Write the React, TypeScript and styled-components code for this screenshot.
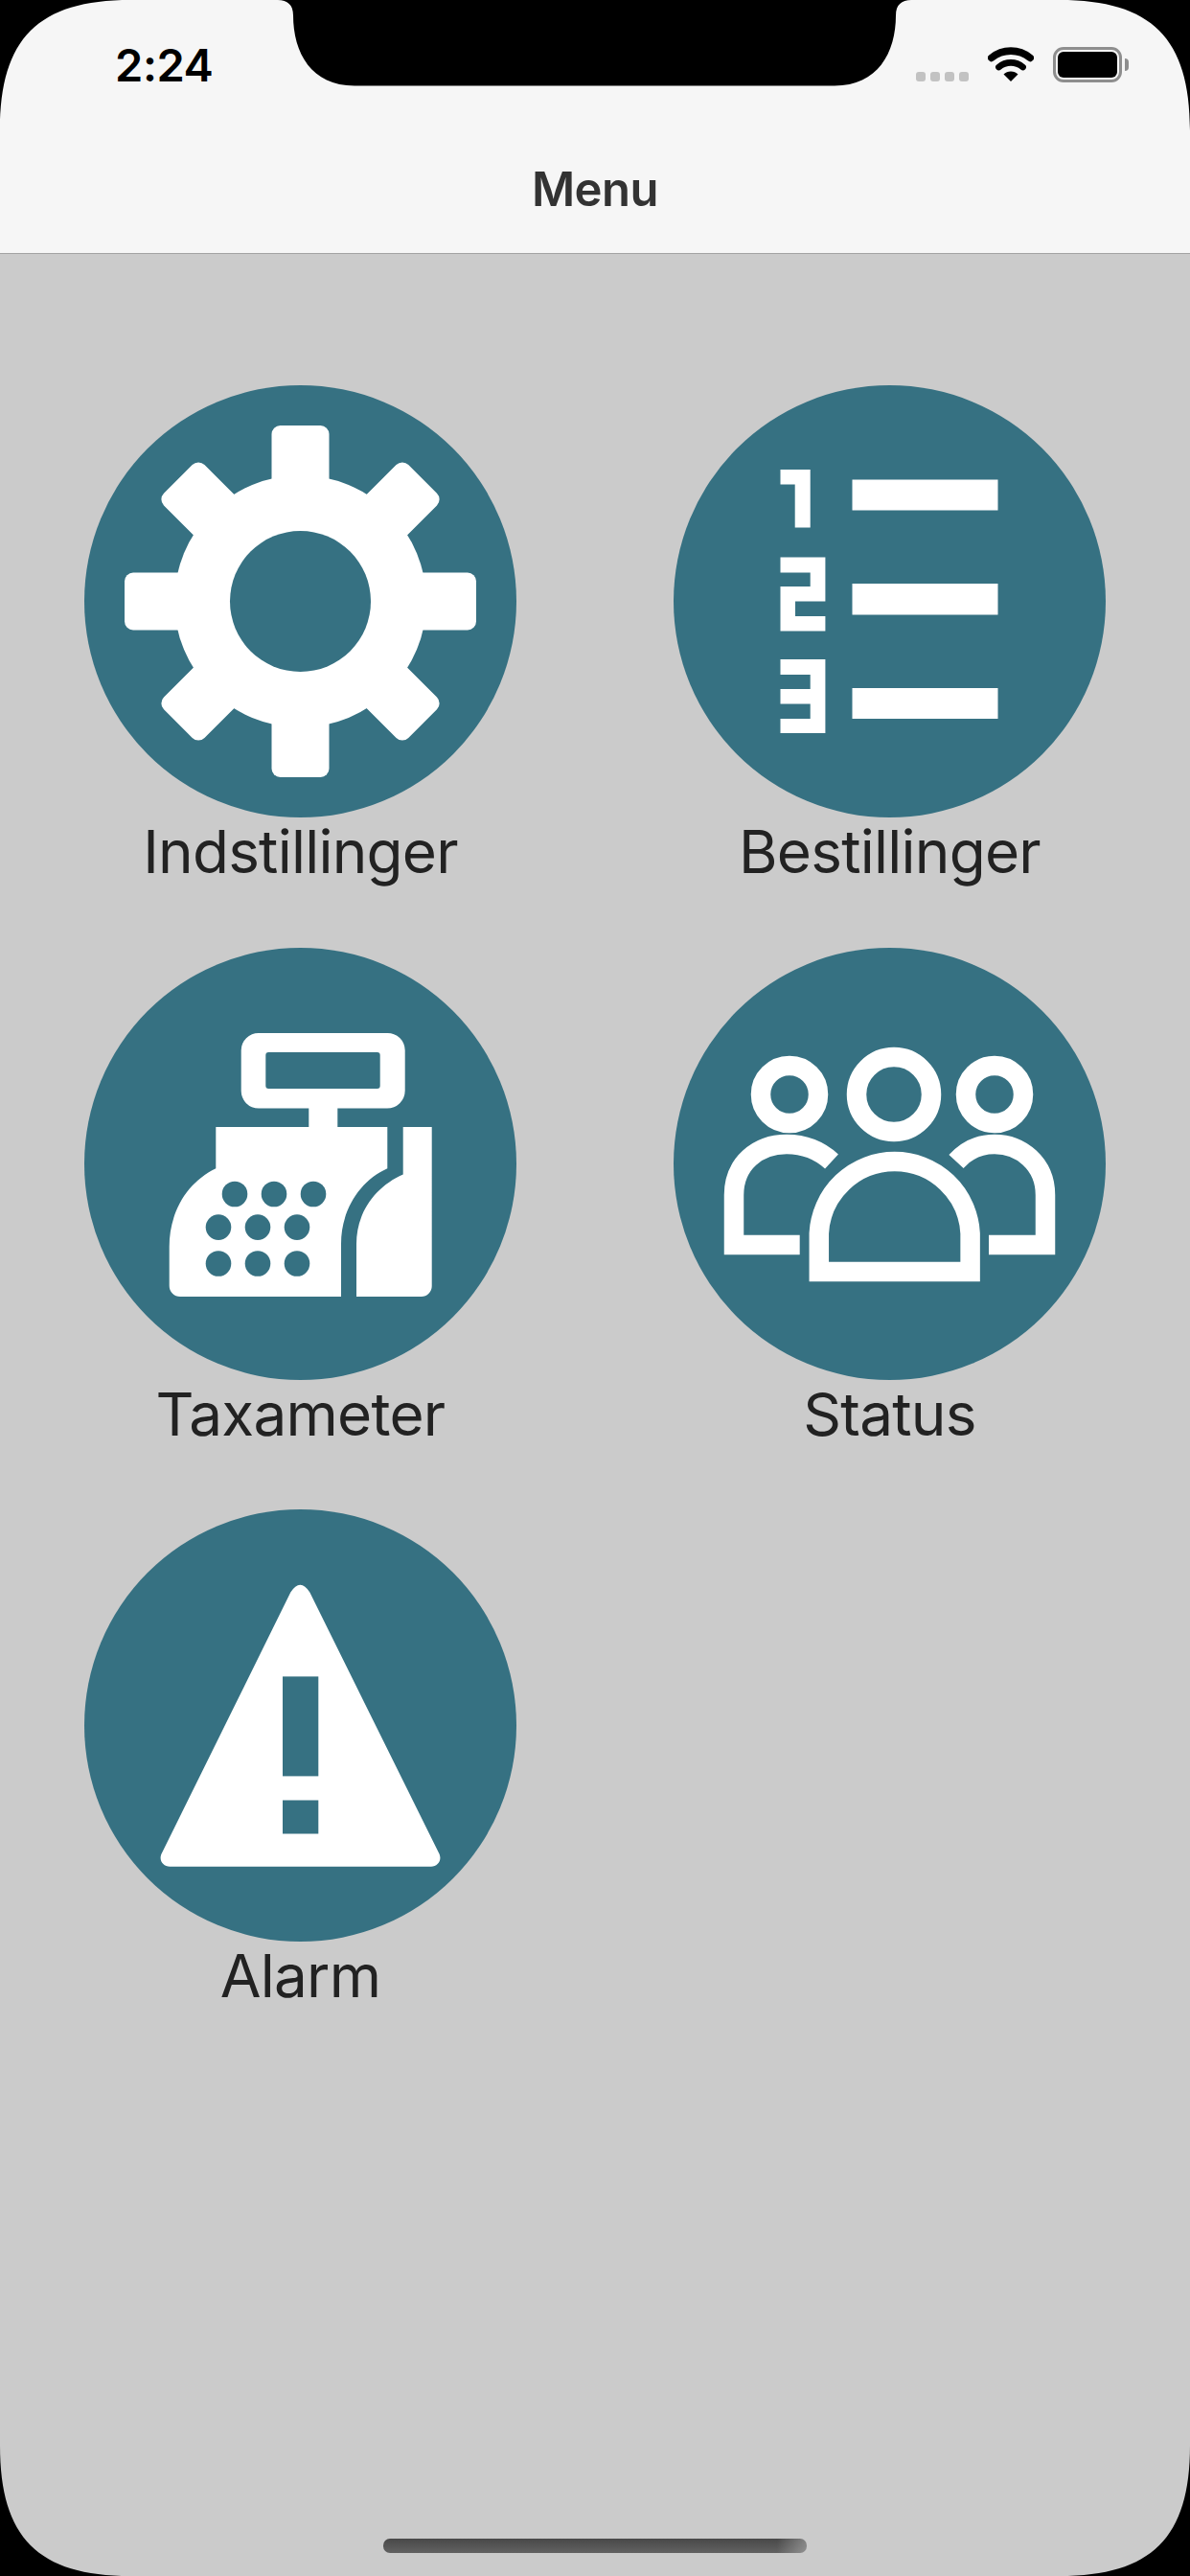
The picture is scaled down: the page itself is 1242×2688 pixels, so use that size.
import React from "react";
import styled, { createGlobalStyle } from "styled-components";

const TEAL = "#367182";
const WHITE = "#ffffff";

const Global = createGlobalStyle`
  html, body { margin: 0; padding: 0; background: #000; }
  * { box-sizing: border-box; }
`;

const Screen = styled.div`
  position: relative;
  width: 1242px;
  height: 2688px;
  overflow: hidden;
  display: flex;
  flex-direction: column;
  background: #cbcbcb;
  font-family: Inter, "Liberation Sans", sans-serif;
`;

const Header = styled.header`
  background: #f6f6f6;
  border-bottom: 1px solid #a3a3a3;
  height: 265px;
  display: flex;
  flex-direction: column;
`;

const StatusBar = styled.div`
  height: 132px;
  padding: 49px 71px 0 120px;
  display: flex;
  justify-content: space-between;
  align-items: flex-start;
`;

const Clock = styled.span`
  font-size: 47px;
  line-height: 38px;
  font-weight: 600;
  color: #000;
  letter-spacing: -0.4px;
`;

const StatusIcons = styled.div`
  display: flex;
  align-items: flex-end;
  height: 37px;
`;

const SignalDots = styled.div`
  display: flex;
  gap: 5px;
  margin-right: 20px;
  margin-bottom: 1px;
`;

const SignalDot = styled.i`
  display: block;
  width: 10px;
  height: 10px;
  border-radius: 3px;
  background: #c2c2c2;
`;

const Wifi = styled.svg`
  width: 48px;
  height: 36px;
  margin-right: 20px;
  margin-bottom: 1px;
`;

const Battery = styled.div`
  position: relative;
  width: 72px;
  height: 37px;
  border: 3px solid #8e8e8e;
  border-radius: 11px;
  padding: 2px;
  &::after {
    content: "";
    position: absolute;
    right: -10px;
    top: 9px;
    width: 4px;
    height: 13px;
    background: #8e8e8e;
    border-radius: 0 4px 4px 0;
  }
`;

const BatteryFill = styled.div`
  width: 100%;
  height: 100%;
  background: #000;
  border-radius: 6px;
`;

const NavBar = styled.nav`
  flex: 1;
  display: flex;
  align-items: center;
  justify-content: center;
`;

const NavTitle = styled.h1`
  margin: 0;
  font-size: 49px;
  line-height: 60px;
  font-weight: 600;
  color: #333;
  letter-spacing: -0.5px;
`;

const Content = styled.main`
  flex: 1;
  padding: 137px 88px 0;
  display: grid;
  grid-template-columns: 451px 451px;
  grid-auto-rows: 523px;
  column-gap: 164px;
  row-gap: 63.5px;
  align-content: start;
`;

const Tile = styled.a`
  display: flex;
  flex-direction: column;
  align-items: center;
`;

const Badge = styled.div`
  width: 451px;
  height: 451px;
  border-radius: 50%;
  background: ${TEAL};
  display: flex;
`;

const Glyph = styled.svg`
  width: 451px;
  height: 451px;
`;

const Label = styled.span`
  font-size: 62px;
  line-height: 72px;
  font-weight: 400;
  color: #222;
  letter-spacing: -0.75px;
  white-space: nowrap;
`;

const HomeBar = styled.div`
  align-self: center;
  width: 442px;
  height: 15px;
  margin-bottom: 24px;
  border-radius: 7px;
  background:
    linear-gradient(90deg, rgba(203, 203, 203, 0) 93%, rgba(203, 203, 203, 0.45) 100%),
    linear-gradient(180deg, #484848 0%, #626262 100%);
`;

const Notch = styled.svg`
  position: absolute;
  top: 0;
  left: 290px;
  width: 661px;
  height: 90px;
`;

const Corner = styled.svg<{ $right?: boolean; $bottom?: boolean }>`
  position: absolute;
  width: 136px;
  height: 136px;
  ${(p) => (p.$right ? "right: 0;" : "left: 0;")}
  ${(p) => (p.$bottom ? "bottom: 0;" : "top: 0;")}
  transform: scale(${(p) => (p.$right ? -1 : 1)}, ${(p) => (p.$bottom ? -1 : 1)});
`;

const GearIcon = () => (
  <Glyph viewBox="0 0 451 451">
    <circle cx="225.5" cy="225.5" r="131.5" fill={WHITE} />
    {[0, 90, 180, 270].map((a) => (
      <rect key={a} x="195.5" y="42" width="60" height="110" rx="9" fill={WHITE} transform={`rotate(${a} 225.5 225.5)`} />
    ))}
    {[45, 135, 225, 315].map((a) => (
      <rect key={a} x="195.5" y="45" width="60" height="110" rx="9" fill={WHITE} transform={`rotate(${a} 225.5 225.5)`} />
    ))}
    <circle cx="225.5" cy="225.5" r="73.5" fill={TEAL} />
  </Glyph>
);

const ListIcon = () => (
  <Glyph viewBox="0 0 451 451">
    <g fill={WHITE}>
      <rect x="186.5" y="98.5" width="152" height="32" />
      <rect x="186.5" y="207" width="152" height="32.5" />
      <rect x="186.5" y="316" width="152" height="32" />
      <path d="M111.5 88H142.7V148.5H126.7V103.5H111.5Z" />
      <path d="M111.5 179.5H158.4V225.6H127V241H158.4V256.6H111.5V210H142.7V195.6H111.5Z" />
      <path d="M111.5 286H158.4V363H111.5V348H142.7V332.5H111.5V317H142.7V302H111.5Z" />
    </g>
  </Glyph>
);

const RegisterIcon = () => (
  <Glyph viewBox="0 0 451 451">
    <path
      fillRule="evenodd"
      fill={WHITE}
      d="M182 89H316A18 18 0 0 1 334.7 107V149A18.6 18.6 0 0 1 316 167.6H264.3V187H316.3V230.3C288 243 268 273 268 309V364H100A11.3 11.3 0 0 1 88.7 352.7V312C88.7 276 107 245 137.3 230.3V187H234.3V167.6H182A18.3 18.3 0 0 1 163.7 149V107A18 18 0 0 1 182 89ZM192.3 109A3 3 0 0 0 189.3 112V144A3 3 0 0 0 192.3 147H305.7A3 3 0 0 0 308.7 144V112A3 3 0 0 0 305.7 109Z"
    />
    <path
      fill={WHITE}
      d="M332.7 187H362.7V353A11 11 0 0 1 351.7 364H284V309C284 276 304 249 332.7 236.5Z"
    />
    <g fill={TEAL}>
      {[
        [157, 257], [198, 257], [239, 257],
        [140, 291.6], [181, 291.6], [222, 291.6],
        [140, 329.5], [181, 329.5], [222, 329.5],
      ].map(([cx, cy]) => (
        <circle key={`${cx}-${cy}`} cx={cx} cy={cy} r="13.3" />
      ))}
    </g>
  </Glyph>
);

const PeopleIcon = () => (
  <Glyph viewBox="0 0 451 451">
    <g fill="none" stroke={WHITE} strokeWidth="20.5">
      <circle cx="230" cy="153" r="39" />
      <circle cx="121" cy="153" r="30" />
      <circle cx="335" cy="153" r="30" />
      <path d="M151.8 338V298A79 79 0 0 1 309.6 298V338Z" />
      <path d="M131.7 310H63V258C63 225 88 205 118 205C138 205 153 212 165 223" />
      <path d="M329 310H388V258C388 225 362 205 335 205C318 205 305 212 295 223" />
    </g>
  </Glyph>
);

const WarningIcon = () => (
  <Glyph viewBox="0 0 451 451">
    <path
      fill={WHITE}
      d="M215.3 86.6Q225.3 71 235.3 86.6L370 358.6C374 366 369 372.7 362 372.7H89.3C82 372.7 77 366 81 358.6Z"
    />
    <rect x="207" y="174.4" width="37.3" height="104" fill={TEAL} />
    <rect x="207" y="303.5" width="37.3" height="35" fill={TEAL} />
  </Glyph>
);

const items = [
  { label: "Indstillinger", Icon: GearIcon },
  { label: "Bestillinger", Icon: ListIcon },
  { label: "Taxameter", Icon: RegisterIcon },
  { label: "Status", Icon: PeopleIcon },
  { label: "Alarm", Icon: WarningIcon },
];

export default function App() {
  return (
    <Screen>
      <Global />
      <Header>
        <StatusBar>
          <Clock>2:24</Clock>
          <StatusIcons>
            <SignalDots>
              <SignalDot />
              <SignalDot />
              <SignalDot />
              <SignalDot />
            </SignalDots>
            <Wifi viewBox="0 0 48 36">
              <g fill="none" stroke="#000" strokeLinecap="round">
                <path d="M3.8 11.4A31.7 31.7 0 0 1 44.2 11.4" strokeWidth="7.6" />
                <path d="M11.5 21A19.5 19.5 0 0 1 36.5 21" strokeWidth="6.8" />
              </g>
              <path d="M24 36L16.5 28.5A10.6 10.6 0 0 1 31.5 28.5Z" fill="#000" />
            </Wifi>
            <Battery>
              <BatteryFill />
            </Battery>
          </StatusIcons>
        </StatusBar>
        <NavBar>
          <NavTitle>Menu</NavTitle>
        </NavBar>
      </Header>
      <Content>
        {items.map(({ label, Icon }) => (
          <Tile key={label}>
            <Badge>
              <Icon />
            </Badge>
            <Label>{label}</Label>
          </Tile>
        ))}
      </Content>
      <HomeBar />
      <Notch viewBox="0 0 661 90">
        <path d="M0 0C10 0 16 5 16 16C16 55 35 89.5 80 89.5H581C626 89.5 645 55 645 16C645 5 651 0 661 0Z" fill="#000" />
      </Notch>
      <Corner viewBox="0 0 136 136"><path d="M0 0H136C40 0 0 40 0 136Z" fill="#000" /></Corner>
      <Corner $right viewBox="0 0 136 136"><path d="M0 0H136C40 0 0 40 0 136Z" fill="#000" /></Corner>
      <Corner $bottom viewBox="0 0 136 136"><path d="M0 0H136C40 0 0 40 0 136Z" fill="#000" /></Corner>
      <Corner $right $bottom viewBox="0 0 136 136"><path d="M0 0H136C40 0 0 40 0 136Z" fill="#000" /></Corner>
    </Screen>
  );
}
